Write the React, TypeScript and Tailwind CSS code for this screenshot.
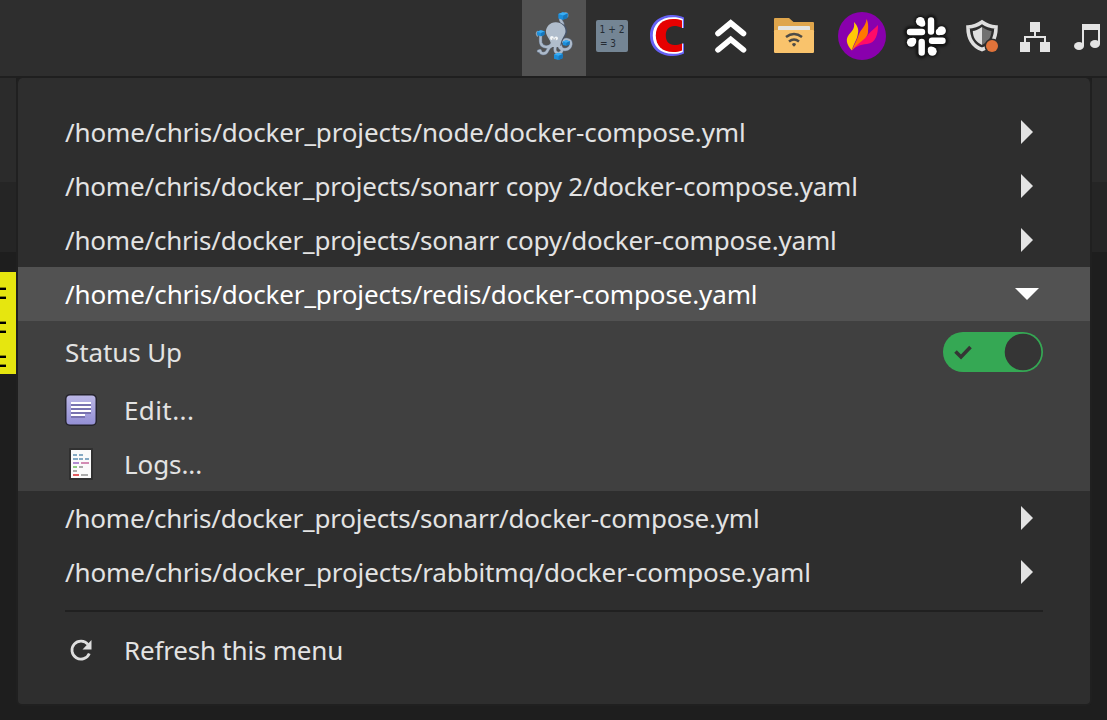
import type { ReactNode } from "react";

function TrayCell({ x, w, active, children }: { x: number; w: number; active?: boolean; children: ReactNode }) {
  return (
    <button className={active ? "block shrink-0 bg-[#525252]" : "block shrink-0"}>
      <svg width={w} height={76} viewBox={`${x} 0 ${w} 76`} className="block">
        {children}
      </svg>
    </button>
  );
}

function Crate({ x, y, scale = 1 }: { x: number; y: number; scale?: number }) {
  return (
    <g transform={`translate(${x} ${y}) scale(${scale})`}>
      <path d="M-4.500 -2 L0 -3.800 L5 -2.500 L4.500 2 L0 3.800 L-4.500 2.500 Z" fill="#1c8edb" />
      <path d="M-4.500 -2 L0 -3.800 L5 -2.500 L.5 -.5 Z" fill="#3aaef5" />
      <path d="M.5 -.5 L5 -2.500 L4.500 2 L0 3.800 Z" fill="#1677bd" />
    </g>
  );
}

function Tentacles() {
  return (
    <>
      <path d="M561.500 28 C565.500 23 560 22 560.500 19" />
      <path d="M552 44 C549 48.500 542 47.500 540.800 43 C540 39.500 541 38 540.500 35" />
      <path d="M551.500 46 C546 48 549 54 543 53.500 C538.500 53 542 49.500 538.500 51" />
      <path d="M559 46 C561 51 570 51 571 44 C571 39 564.500 38 563.500 42" />
      <path d="M556 45 C553 52 557 54 560 53 C564.500 50 560.500 47 559.500 44" />
    </>
  );
}

function Octopus() {
  return (
    <g fill="none" strokeLinecap="round" strokeLinejoin="round">
      <g stroke="#68778c" strokeWidth="3.4"><Tentacles /></g>
      <g stroke="#adbaca" strokeWidth="2.4"><Tentacles /></g>
      <path d="M556.500 22.500 C563 22 568 27 567 32.500 C566 37 561 40 561 46 L551 45 C552 40 546 36 546 31.500 C546.500 26.500 551 22.500 556.500 22.500 Z" fill="#475469" />
      <path d="M555.500 22.200 C561.500 22 566 26.500 565.500 32 C564.500 37 560 40 560.500 47 L551 47 C552 40 545.900 37 545.900 31.500 C546.200 26.500 550 22.300 555.500 22.200 Z" fill="#b0bdcc" />
      <circle cx="551.900" cy="38" r="1.900" fill="#f3f6f8" />
      <circle cx="556.100" cy="38.300" r="1.900" fill="#f3f6f8" />
      <circle cx="552.500" cy="38.900" r=".4" fill="#333" />
      <circle cx="555.600" cy="39" r=".4" fill="#333" />
      <path d="M565 13 q3.500 -.5 2.500 3.500 M537.500 36 q-2 -2.500 0 -4.500" stroke="#8f9dac" strokeWidth="1.5" />
      <Crate x={562.8} y={16} />
      <Crate x={540.7} y={33.3} scale={0.8} />
      <Crate x={566.1} y={43} scale={0.75} />
      <Crate x={558.3} y={56.3} scale={0.95} />
    </g>
  );
}

function SlackLobes() {
  return (
    <>
      <path d="M931 20.500 V31.500 M922 32 H910 M921.700 42 V52.500 M932 40.700 H942.500" />
      <path d="M920.300 21.300 h.1 M922 23.500 h.1 M941.500 30.700 h.1 M939 32 h.1 M911.300 42.300 h.1 M913 41 h.1 M932.300 51.300 h.1 M931 49.700 h.1" />
    </>
  );
}

function Tray() {
  return (
    <header className="flex h-[78px] w-full shrink-0 border-b-2 border-[#1f1f1f] bg-[#2e2e2e] pl-[522px]">
      <TrayCell x={522} w={64} active><Octopus /></TrayCell>
      <TrayCell x={586} w={54}>
        <rect x="596" y="20" width="32" height="32" rx="2" fill="#748594" />
        <g fill="#252c34" fontFamily="'DejaVu Sans Condensed', 'DejaVu Sans', sans-serif" fontSize="11" fontStretch="condensed">
          <text x="599.500" y="33" textLength="25" lengthAdjust="spacingAndGlyphs">1 + 2</text>
          <text x="600" y="47" textLength="16" lengthAdjust="spacingAndGlyphs">= 3</text>
        </g>
      </TrayCell>
      <TrayCell x={640} w={60}>
        <path d="M684 17.500 C681 16 677 15 673 15 C659 15 650 23 650 35.500 C650 48 659 56 673 56 C677 56 681 55 684 53.500 V43 H682 V28.500 H684 Z" fill="#6661f5" />
        <path d="M682.800 19 C680 17.700 677 17.200 673 17.200 C660.500 17.200 652.800 24.500 652.800 35.500 C652.800 46.500 660.500 53.800 673 53.800 C677 53.800 680 53.300 682.800 52 V43 H682 V28.500 H682.800 Z" fill="#fff" />
        <path d="M682 20.500 C679 19.300 677 19 673 19 C662 19 655.800 25.500 655.800 35.500 C655.800 45.500 662 52 673 52 C677 52 679 51.700 682 50.500 V28 Z" fill="#e60000" />
        <path d="M685 28 H682 C679 26.500 677 26 674.500 26 C669 26 665.800 29.500 665.800 35.500 C665.800 41.500 669 45 674.500 45 C677 45 679 44.500 682 43.500 H685 Z" fill="#2e2e2e" />
      </TrayCell>
      <TrayCell x={700} w={64}>
        <path d="M718 33.500 L730.700 23 L743.500 33.500 M718 49.800 L730.700 39.300 L743.500 49.800" fill="none" stroke="#fff" strokeWidth="5.600" strokeLinecap="round" />
      </TrayCell>
      <TrayCell x={764} w={64}>
        <path d="M775 18 H789 L793.500 22 H813 Q814 22 814 23 V33 H774 V19 Q774 18 775 18 Z" fill="#dfa54b" />
        <path d="M778 31 V27 Q778 26 779 26 H809 Q810 26 810 27 V31 Z" fill="#e4e4e0" />
        <rect x="774" y="30" width="40" height="23" rx="1.2" fill="#f9c36c" />
        <g fill="none" stroke="#4d4b46" strokeWidth="2.500">
          <path d="M786 37 Q794 31 802 37 M789 41.500 Q794 37.500 799 41.500" />
        </g>
        <path d="M792 44 Q794 42 796 44 Q796 45 794 46.700 Q792 45 792 44Z" fill="#4d4b46" />
      </TrayCell>
      <TrayCell x={828} w={68}>
        <circle cx="862" cy="36" r="24" fill="#8900ad" />
        <path d="M852 50.500 C857 41 865 40 869 33.500 C872 30 875 28.500 878 25 C878 34 876 43 867 44 C860 44.500 855 47 852 50.500Z" fill="#ff0b68" />
        <path d="M852 50.500 C855 43 857 40 859 34 C861 29 866 26 866.500 19 C869 24 868 29 868 32 C868 39 860 40 852 50.500Z" fill="#ff7700" />
        <path d="M852 50.500 C846 44 845.500 39 849 34.500 C852 31 855 29 854 22 C857 25 859 29 858 33 C857 41 853 44 852 50.500Z" fill="#ffc906" />
      </TrayCell>
      <TrayCell x={896} w={62}>
        <g stroke="#151515" strokeWidth="12" fill="none" strokeLinecap="round" className="blur-[1.2px]"><SlackLobes /></g>
        <g stroke="#fff" fill="none" strokeLinecap="round" strokeWidth="6.4" className="blur-[0.6px]"><SlackLobes /></g>
        <g fill="#fff" className="blur-[0.6px]">
          <circle cx="920.300" cy="21.300" r="4.400" />
          <circle cx="941.500" cy="30.700" r="4.400" />
          <circle cx="911.300" cy="42.300" r="4.400" />
          <circle cx="932.300" cy="51.300" r="4.400" />
        </g>
      </TrayCell>
      <TrayCell x={958} w={52}>
        <path d="M982 22 Q988 26.500 996 27 C996 38 992 46 982 49.500 C972 46 968 38 968 27 Q976 26.500 982 22Z" fill="none" stroke="#dfdfdf" strokeWidth="3.600" />
        <path d="M982 27 Q976 31 972.800 31 C973 38 976 42 982 45 Z" fill="#dfdfdf" />
        <path d="M982 27 Q988 31 991.500 31 C991 38 988 42 982 45 Z" fill="#707070" />
        <circle cx="992" cy="46" r="7.500" fill="#2e2e2e" />
        <circle cx="992" cy="46" r="6" fill="#e0733a" />
      </TrayCell>
      <TrayCell x={1010} w={52}>
        <path d="M1030 22h10v10h-10z M1020 42h10v10h-10z M1040 42h10v10h-10z" fill="#e4e4e4" />
        <path d="M1035 32 V37 M1025 42 V37 H1045 V42" fill="none" stroke="#e4e4e4" strokeWidth="2" />
      </TrayCell>
      <TrayCell x={1062} w={45}>
        <path d="M1082 24 H1100 V44 H1098 V30 H1084 V46 H1082 Z" fill="#e4e4e4" />
        <ellipse cx="1079" cy="46" rx="5" ry="4" fill="#e4e4e4" />
        <ellipse cx="1095" cy="44" rx="5" ry="4" fill="#e4e4e4" />
      </TrayCell>
    </header>
  );
}

function ProjectRow({ path, spacing, open }: { path: string; spacing: string; open?: boolean }) {
  return (
    <button
      className={
        "flex h-[54px] w-full items-center justify-between pl-[47px] pr-[51px] text-left " +
        (open ? "bg-[#525252] text-white" : "text-[#e3e3e3]")
      }
    >
      <span className={"whitespace-nowrap " + spacing}>{path}</span>
      <svg width="24" height="24" viewBox="0 0 24 24" fill="currentColor">
        {open ? <path d="M0 6 H24 L12 18 Z" /> : <path d="M6 0 V24 L18 12 Z" />}
      </svg>
    </button>
  );
}

function EditIcon() {
  return (
    <svg width="32" height="32" viewBox="0 0 32 32">
      <defs>
        <linearGradient id="note" x1="0" y1="0" x2="0" y2="1">
          <stop offset="0" stopColor="#bbb7e6" />
          <stop offset="1" stopColor="#9490d5" />
        </linearGradient>
      </defs>
      <rect x="0" y="0" width="32" height="32" rx="5" fill="#25242c" />
      <rect x="1.500" y="1.500" width="29" height="29" rx="3.500" fill="url(#note)" />
      <path d="M6 10h20v2H6z M6 14h20v2H6z M6 18h20v2H6z M6 22h14v2H6z" fill="#7873b0" />
      <path d="M6 8h20v2H6z M6 12h20v2H6z M6 16h20v2H6z M6 20h14v2H6z" fill="#fff" />
    </svg>
  );
}

function LogsIcon() {
  return (
    <svg width="32" height="32" viewBox="0 0 32 32">
      <rect x="4" width="24" height="32" rx=".8" fill="#303030" />
      <rect x="6" y="2" width="20" height="28" fill="#fafafa" />
      <path d="M8 6h4v2H8z M14 6h4v2h-4z M8 10h5v2H8z M14 10h4v2h-4z M20 10h4v2h-4z" fill="#85a9c3" />
      <path d="M8 14h6v2H8z" fill="#b18bd0" />
      <path d="M16 14h8v2h-8z" fill="#d28cb3" />
      <path d="M8 18h4v2H8z" fill="#8dcc83" />
      <path d="M14 18h4v2h-4z M8 22h4v2H8z M16 26h7v2h-7z" fill="#aaa" />
      <path d="M8 26h6v2H8z" fill="#e05b5f" />
    </svg>
  );
}

function Backdrop({ marked }: { marked?: boolean }) {
  return (
    <div className="flex min-w-0 flex-1 flex-col bg-[#1e1e1e]">
      <div className="h-[104px] bg-[#2b2b2b]" />
      <div className="h-[70px] bg-[#252525]" />
      {marked && (
        <div className="mt-5 flex h-[102px] flex-col bg-[#e6e60f] pt-[15px]">
          {[0, 1, 2].map((n) => (
            <div key={n} className="mb-[22px] flex h-[12px] w-[6px] shrink-0 flex-col justify-between">
              <div className="h-[3px] border-t border-[#88880a] bg-black" />
              <div className="h-[3px] border-t border-[#88880a] bg-black" />
            </div>
          ))}
        </div>
      )}
    </div>
  );
}

export default function App() {
  return (
    <div className="flex h-[720px] w-[1107px] flex-col overflow-hidden bg-[#1e1e1e] font-['Noto_Sans',sans-serif] text-[26px] leading-[36px]">
      <Tray />
      <div className="flex flex-1">
        <div className="flex w-4"><Backdrop marked /></div>
        <main className="h-[628px] w-[1076px] overflow-hidden rounded-[6px] border-x-2 border-b-2 border-[#202020] bg-[#2e2e2e] pt-[27px]">
          <ProjectRow path="/home/chris/docker_projects/node/docker-compose.yml" spacing="tracking-[-0.13px]" />
          <ProjectRow path="/home/chris/docker_projects/sonarr copy 2/docker-compose.yaml" spacing="tracking-[-0.2px]" />
          <ProjectRow path="/home/chris/docker_projects/sonarr copy/docker-compose.yaml" spacing="tracking-[-0.2px]" />
          <ProjectRow path="/home/chris/docker_projects/redis/docker-compose.yaml" spacing="tracking-[-0.13px]" open />
          <section className="bg-[#404040] text-[#e3e3e3]">
            <div className="flex h-[62px] items-center justify-between pl-[47px] pr-[47px]">
              <span className="tracking-[-0.1px]">Status Up</span>
              <svg width="100" height="40" viewBox="0 0 100 40">
                <rect width="100" height="40" rx="20" fill="#35a854" />
                <circle cx="80" cy="20" r="18.300" fill="#353535" />
                <path d="M12.500 19.500 L18 25 L27.500 15" fill="none" stroke="#353535" strokeWidth="3.600" />
              </svg>
            </div>
            <button className="flex h-[54px] w-full items-center gap-[27px] pl-[47px]"><EditIcon /><span className="tracking-[0.4px]">Edit...</span></button>
            <button className="flex h-[54px] w-full items-center gap-[27px] pl-[47px]"><LogsIcon /><span className="tracking-[-0.1px]">Logs...</span></button>
          </section>
          <ProjectRow path="/home/chris/docker_projects/sonarr/docker-compose.yml" spacing="tracking-[-0.2px]" />
          <ProjectRow path="/home/chris/docker_projects/rabbitmq/docker-compose.yaml" spacing="tracking-[-0.12px]" />
          <hr className="mx-[47px] my-[11px] h-[2px] border-0 bg-[#202020]" />
          <button className="flex h-[54px] w-full items-center gap-[27px] pl-[47px] text-[#e3e3e3]">
            <svg width="32" height="32" viewBox="0 0 32 32">
              <path d="M23 10.500 A9 9 0 1 0 24.300 19.500" fill="none" stroke="#dedede" strokeWidth="2.800" />
              <path d="M26.500 6 V15.500 H17.500 Z" fill="#dedede" />
            </svg>
            <span className="tracking-[-0.2px]">Refresh this menu</span>
          </button>
        </main>
        <Backdrop />
      </div>
    </div>
  );
}
